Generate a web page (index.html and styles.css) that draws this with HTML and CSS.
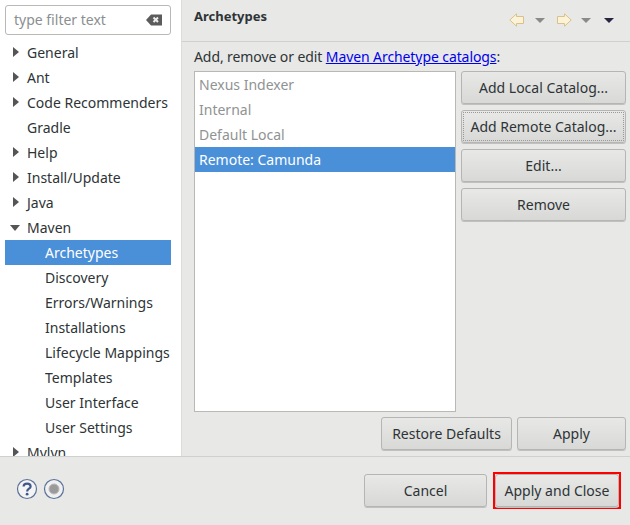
FILE: index.html
```html
<!DOCTYPE html>
<html lang="en">
<head>
    <meta charset="UTF-8">
    <title>Preferences</title>
    <link rel="stylesheet" href="styles.css">
</head>
<body>

    <div class="main">
        <div class="sidebar">
            <div class="filter">
                <span class="filter-text">type filter text</span>
                <svg class="clear" width="16" height="12" viewBox="0 0 16 12">
                    <path d="M0 6 L5 .5 H16 V11.5 H5 Z" fill="#5c5c5c"/>
                    <path d="M7.5 3.5 L12 8 M12 3.5 L7.5 8" stroke="#eee" stroke-width="2"/>
                </svg>
            </div>
            <ul class="tree">
                <li class="row closed">General</li>
                <li class="row closed">Ant</li>
                <li class="row closed">Code Recommenders</li>
                <li class="row">Gradle</li>
                <li class="row closed">Help</li>
                <li class="row closed">Install/Update</li>
                <li class="row closed">Java</li>
                <li class="row open">Maven</li>
                <li class="row child selected">Archetypes</li>
                <li class="row child">Discovery</li>
                <li class="row child">Errors/Warnings</li>
                <li class="row child">Installations</li>
                <li class="row child">Lifecycle Mappings</li>
                <li class="row child">Templates</li>
                <li class="row child">User Interface</li>
                <li class="row child">User Settings</li>
                <li class="row closed">Mylyn</li>
            </ul>
        </div>

        <div class="content">
            <div class="header">
                <h2>Archetypes</h2>
                <div class="nav">
                    <svg class="back" width="16" height="14" viewBox="0 0 16 14"><path d="M.8 7 L7.5 .8 V3.5 H14.5 V10.5 H7.5 V13.2 Z" fill="#fbf3d8" stroke="#dcc08a"/></svg>
                    <span class="caret first"></span>
                    <svg class="forward" width="16" height="14" viewBox="0 0 16 14"><path d="M15.2 7 L8.5 .8 V3.5 H1.5 V10.5 H8.5 V13.2 Z" fill="#fbf3d8" stroke="#dcc08a"/></svg>
                    <span class="caret second"></span>
                    <span class="caret dark"></span>
                </div>
            </div>
            <div class="page">
                <p class="desc">Add, remove or edit <a href="#">Maven Archetype catalogs</a>:</p>
                <div class="columns">
                    <ul class="catalogs">
                        <li class="muted">Nexus Indexer</li>
                        <li class="muted">Internal</li>
                        <li class="muted">Default Local</li>
                        <li class="selected">Remote: Camunda</li>
                    </ul>
                    <div class="side-buttons">
                        <button>Add Local Catalog...</button>
                        <button class="focused">Add Remote Catalog...</button>
                        <button>Edit...</button>
                        <button>Remove</button>
                    </div>
                </div>
                <div class="page-buttons">
                    <button class="restore">Restore Defaults</button>
                    <button class="apply">Apply</button>
                </div>
            </div>
        </div>
    </div>

    <div class="footer">
        <div class="help">
            <svg width="22" height="22" viewBox="0 0 22 22">
                <circle cx="11" cy="11" r="9.5" fill="#f4f4f4" stroke="#5a7299" stroke-width="1.2"/>
                <path d="M7.6 8.4 C7.6 4.6 14.6 4.6 14.6 8.4 C14.6 10.8 11.1 10.6 11.1 13.4" fill="none" stroke="#3f5a8a" stroke-width="2.2"/>
                <circle cx="11.1" cy="16.2" r="1.4" fill="#3f5a8a"/>
            </svg>
            <svg width="22" height="22" viewBox="0 0 22 22">
                <circle cx="11" cy="11" r="9.5" fill="#f0f0f0" stroke="#5a7299" stroke-width="1.2"/>
                <circle cx="11" cy="11" r="5" fill="#9a9a9a" stroke="#bbb"/>
            </svg>
        </div>
        <div class="footer-buttons">
            <button class="cancel">Cancel</button>
            <div class="highlight"><button>Apply and Close</button></div>
        </div>
    </div>

</body>
</html>
```

FILE: styles.css
```css
* { box-sizing: border-box; }
html, body { margin: 0; height: 525px; overflow: hidden; }
body { font-family: "Noto Sans", sans-serif; font-size: 14px; color: #2e3436; background: #e8e8e7; }

.main { display: flex; height: 456px; }

.sidebar { width: 181px; background: white; padding: 5px 10px 0 5px; overflow: hidden; }
.filter { height: 30px; border: 1px solid #b8b8b5; border-radius: 3px; display: flex; align-items: center; justify-content: space-between; padding: 0 8px 2px; }
.filter-text { color: #8a8f90; }
.clear { margin-top: 2px; }
.tree { list-style: none; margin: 5px 0 0; padding: 0; }
.row { height: 25px; line-height: 25px; padding-left: 22px; position: relative; white-space: nowrap; color: #2e3436; }
.row.child { padding-left: 40px; }
.row.selected { background: #4a90d9; color: white; }
.closed::before { content: ""; position: absolute; left: 8px; top: 7px; border-left: 6px solid #555; border-top: 5px solid transparent; border-bottom: 5px solid transparent; }
.open::before { content: ""; position: absolute; left: 5px; top: 10px; border-top: 6px solid #555; border-left: 5px solid transparent; border-right: 5px solid transparent; }

.content { flex: 1; border-left: 1px solid #dcdcda; min-width: 0; }
.header { height: 42px; border-bottom: 1px solid #d0d0ce; display: flex; justify-content: space-between; align-items: flex-start; padding: 6px 16px 0 12px; }
h2 { font-size: 13px; font-weight: bold; margin: 0; line-height: 20px; }
.nav { display: flex; align-items: center; padding-top: 7px; }
.caret { width: 0; height: 0; border-top: 5px solid #8a8a8a; border-left: 5px solid transparent; border-right: 5px solid transparent; }
.caret.first { margin: 0 11px 0 10px; }
.caret.second { margin: 0 13px 0 9px; }
.caret.dark { border-top-color: #2a2440; }

.page { padding: 5px 4px 0 12px; }
.desc { margin: 0; height: 24px; line-height: 20px; letter-spacing: -0.09px; }
a { color: #0000ee; }

.columns { display: flex; gap: 5px; height: 341px; }
.catalogs { list-style: none; margin: 0; padding: 0; width: 262px; background: white; border: 1px solid #b8b8b5; }
.catalogs li { height: 25px; line-height: 25px; padding-left: 4px; }
.catalogs .muted { color: #8f9393; }
.catalogs .selected { background: #4a90d9; color: white; }

button { font: inherit; color: #2e3436; height: 33px; padding: 0; border: 1px solid #b5b5b3; border-radius: 3px; background: linear-gradient(#e8e8e7, #d8d8d6); box-shadow: 0 1px 0 #c0c0be; }
.side-buttons { flex: 1; display: flex; flex-direction: column; gap: 6px; }
.focused { outline: 1px dotted #999; outline-offset: -3px; }

.page-buttons { display: flex; justify-content: flex-end; gap: 5px; margin-top: 5px; }
.restore { width: 131px; }
.apply { width: 109px; }

.footer { height: 69px; border-top: 1px solid #d0d0ce; display: flex; justify-content: space-between; align-items: flex-start; padding: 15px 9px 0 16px; }
.help { display: flex; gap: 5px; padding-top: 6px; }
.footer-buttons { display: flex; align-items: center; gap: 6px; }
.cancel { width: 123px; }
.highlight { border: 2px solid #ff0000; display: flex; }
.highlight button { width: 124px; }
```
